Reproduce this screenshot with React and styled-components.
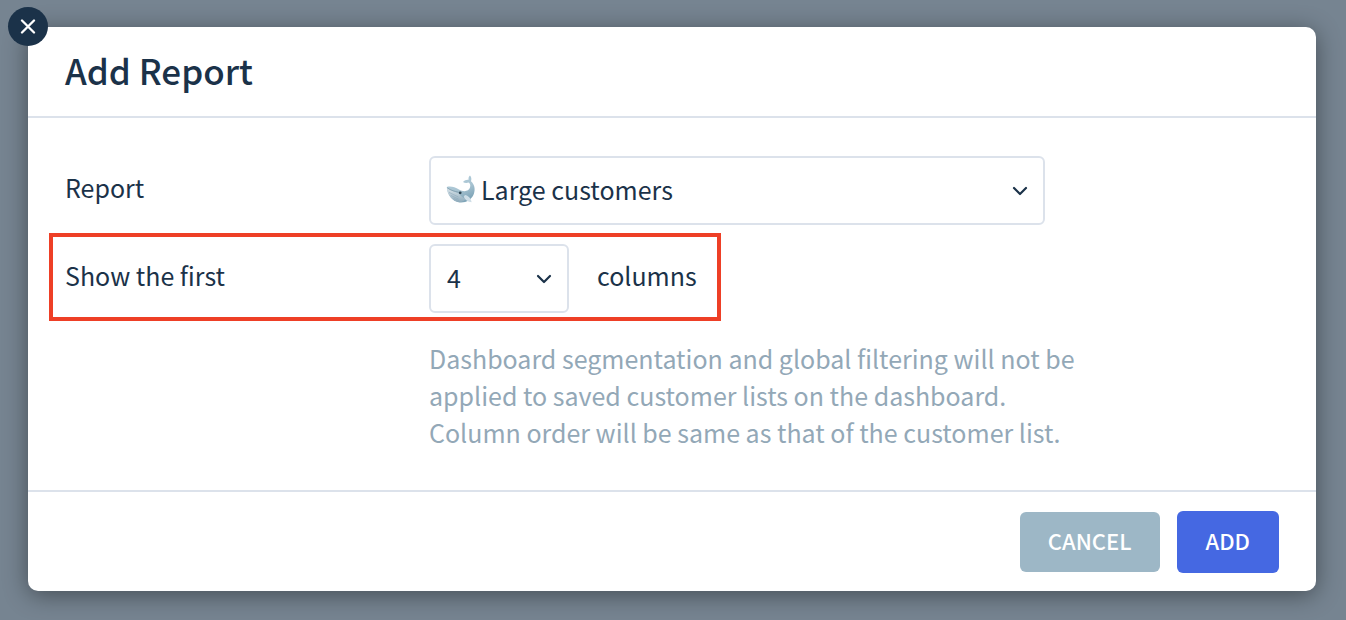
import React, { useState } from 'react';
import styled, { createGlobalStyle } from 'styled-components';

const GlobalStyle = createGlobalStyle`
  * {
    box-sizing: border-box;
  }

  body {
    margin: 0;
    background: #768491;
    color: #1b3249;
    font-family: 'Noto Sans CJK SC', 'Noto Sans', sans-serif;
    font-size: 25px;
    line-height: 37px;
  }

  button,
  select {
    font: inherit;
    color: inherit;
  }
`;

const Overlay = styled.div`
  padding: 27px 30px 29px 28px;
`;

const Modal = styled.form`
  position: relative;
  background: #fff;
  border-radius: 10px;
  box-shadow: 0 4px 24px rgba(0, 0, 0, 0.42);
`;

const CloseButton = styled.button`
  position: absolute;
  top: -20px;
  left: -20px;
  display: flex;
  align-items: center;
  justify-content: center;
  width: 40px;
  height: 39px;
  padding: 0;
  border: 0;
  border-radius: 50%;
  background: #1b3249;
  cursor: pointer;
`;

const Header = styled.header`
  padding: 18px 37px 22px;
  border-bottom: 2px solid #dce2eb;
`;

const Title = styled.h1`
  margin: 0;
  font-size: 35px;
  font-weight: 500;
  line-height: 49px;
`;

const Body = styled.div`
  padding: 38px 37px 39px;
`;

const Row = styled.div`
  display: flex;
  align-items: center;
`;

const HighlightedRow = styled(Row)`
  width: fit-content;
  margin: 8px 0 0 -16px;
  padding: 7px 20px 4px 12px;
  border: 4px solid #ee3f26;
`;

const Label = styled.label`
  flex: none;
  width: 364px;
  padding-bottom: 6px;
`;

const Suffix = styled.span`
  margin-left: 28px;
  padding-bottom: 6px;
`;

const SelectWrap = styled.div`
  position: relative;
  width: ${props => props.$width};
`;

const Select = styled.select`
  display: block;
  appearance: none;
  width: 100%;
  height: 69px;
  padding: 0 48px 2px ${props => (props.$hasIcon ? '50px' : '16px')};
  border: 2px solid #dce2eb;
  border-radius: 6px;
  background: #fff;
`;

const Chevron = styled.svg`
  position: absolute;
  top: 29px;
  right: 17px;
  pointer-events: none;
`;

const WhaleIcon = styled.svg`
  position: absolute;
  top: 18px;
  left: 17px;
  pointer-events: none;
`;

const Help = styled.p`
  max-width: 660px;
  margin: 19px 0 0 364px;
  color: #93a8b7;
`;

const Footer = styled.footer`
  display: flex;
  align-items: center;
  justify-content: flex-end;
  gap: 17px;
  padding: 19px 37px 18px;
  border-top: 2px solid #dce2eb;
`;

const Button = styled.button`
  height: ${props => (props.$primary ? '62px' : '60px')};
  padding: ${props => (props.$primary ? '0 29px 4px' : '0 28px 4px')};
  border: 0;
  border-radius: 6px;
  background: ${props => (props.$primary ? '#4568e2' : '#9db7c6')};
  color: #fff;
  font-size: 22px;
  font-weight: 500;
  cursor: pointer;
`;

const Whale = () => (
  <WhaleIcon width="30" height="30" viewBox="0 0 30 30" aria-hidden="true">
    <defs>
      <linearGradient id="whale-skin" x1="0" y1="0" x2="0.5" y2="1">
        <stop offset="0" stopColor="#b4d0de" />
        <stop offset="0.6" stopColor="#a9c4d2" />
        <stop offset="1" stopColor="#7fa5b8" />
      </linearGradient>
      <linearGradient id="whale-belly" x1="0" y1="0" x2="0" y2="1">
        <stop offset="0" stopColor="#dbe5eb" />
        <stop offset="1" stopColor="#8fabbb" />
      </linearGradient>
    </defs>
    <path
      d="M0.8 13C4.5 11.8 9 13.2 13 15.6C17.5 18.2 22.8 17.6 24 13.6C24.7 11.2 24 9.6 22.6 8.6C20.6 9.4 18.4 9.1 17 7.9C18.5 6.1 20.8 5.4 22.6 5.7C22.3 4 22.8 2.6 24 1.6C25.5 3.1 25.7 5.3 25 7.2C28.6 10.4 29.6 15.4 27.8 20C25.6 25.8 19.8 29.1 13.4 28.4C6.2 27.5 1 20.5 0.8 13Z"
      fill="url(#whale-skin)"
    />
    <path
      d="M1 14C4.5 16.6 9.5 18 13.2 19.8C14.6 22.2 17 23.8 19.6 25C17.4 27.8 14.4 28.6 11.5 27.8C5.5 26.2 1.4 20 1 14Z"
      fill="url(#whale-belly)"
    />
    <path
      d="M3 18.4L12.4 23M4.8 21.4L12.4 25M7.4 24.4L13 26.6"
      fill="none"
      stroke="#8faaba"
      strokeWidth="0.6"
    />
    <path d="M19 21C22 21.5 25 24.2 25.6 28.2C22 28 18.8 25.5 17.8 22.4Z" fill="#cfdee7" />
    <path d="M1.2 13.8C5 16.6 9 17.4 12.6 18.2" fill="none" stroke="#7793a4" strokeWidth="0.7" />
    <circle cx="14.2" cy="18.8" r="1.4" fill="#304653" />
  </WhaleIcon>
);

const ChevronIcon = () => (
  <Chevron width="16" height="12" viewBox="0 0 16 12" aria-hidden="true">
    <path
      d="M2 3L8 9L14 3"
      fill="none"
      stroke="#1b3249"
      strokeWidth="2.2"
      strokeLinecap="round"
      strokeLinejoin="round"
    />
  </Chevron>
);

const App = () => {
  const [report, setReport] = useState('large');
  const [columns, setColumns] = useState('4');

  return (
    <>
      <GlobalStyle />
      <Overlay>
        <Modal
          role="dialog"
          aria-labelledby="modal-title"
          onSubmit={e => e.preventDefault()}
        >
          <CloseButton type="button" aria-label="Close">
            <svg width="16" height="16" viewBox="0 0 16 16" aria-hidden="true">
              <path
                d="M2 1.5L14 13.5M14 1.5L2 13.5"
                stroke="#fff"
                strokeWidth="2.3"
                strokeLinecap="round"
              />
            </svg>
          </CloseButton>
          <Header>
            <Title id="modal-title">Add Report</Title>
          </Header>
          <Body>
            <Row>
              <Label htmlFor="report">Report</Label>
              <SelectWrap $width="616px">
                <Select
                  id="report"
                  $hasIcon
                  value={report}
                  onChange={e => setReport(e.target.value)}
                >
                  <option value="large">Large customers</option>
                </Select>
                <Whale />
                <ChevronIcon />
              </SelectWrap>
            </Row>
            <HighlightedRow>
              <Label htmlFor="columns">Show the first</Label>
              <SelectWrap $width="140px">
                <Select
                  id="columns"
                  value={columns}
                  onChange={e => setColumns(e.target.value)}
                >
                  <option value="4">4</option>
                </Select>
                <ChevronIcon />
              </SelectWrap>
              <Suffix>columns</Suffix>
            </HighlightedRow>
            <Help>
              Dashboard segmentation and global filtering will not be applied to
              saved customer lists on the dashboard. Column order will be same as
              that of the customer list.
            </Help>
          </Body>
          <Footer>
            <Button type="button">CANCEL</Button>
            <Button type="submit" $primary>
              ADD
            </Button>
          </Footer>
        </Modal>
      </Overlay>
    </>
  );
};

export default App;
